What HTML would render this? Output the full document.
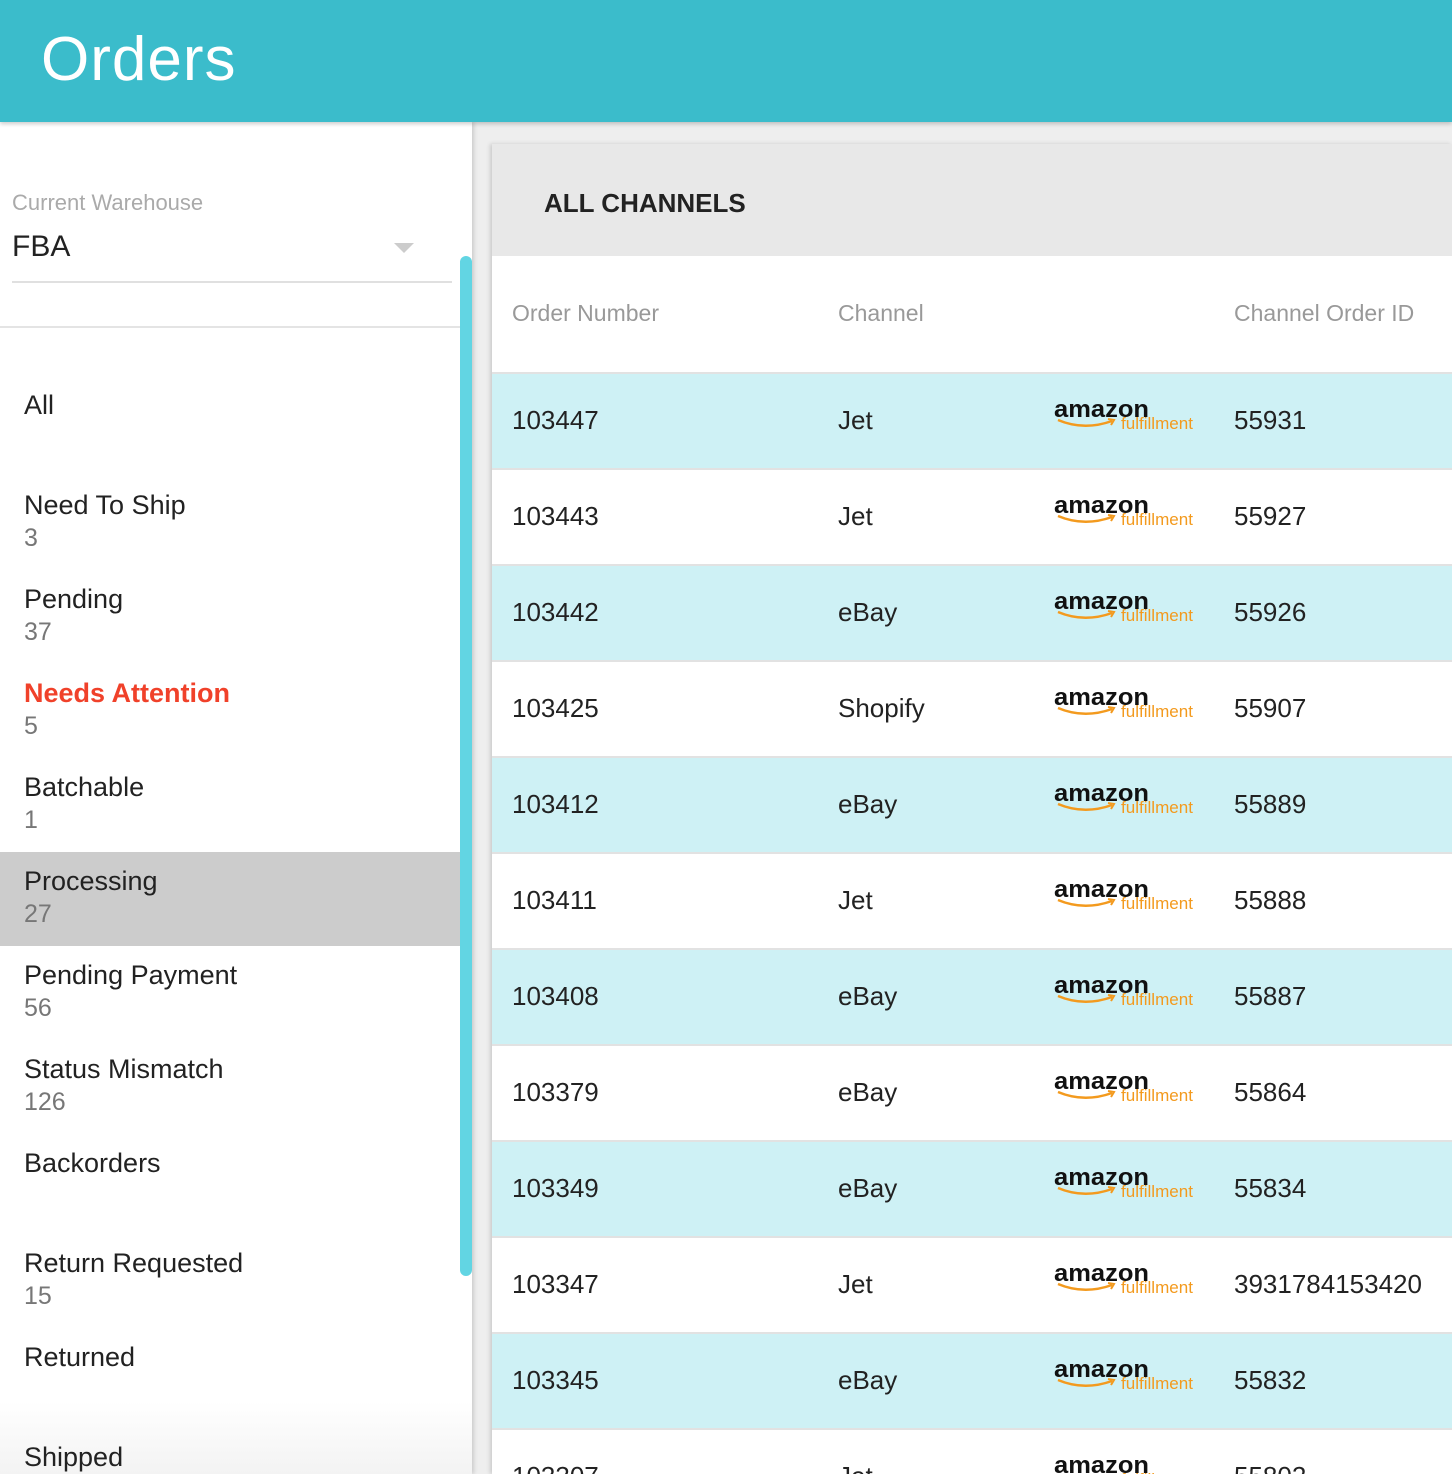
<!DOCTYPE html>
<html style="overflow:hidden;height:1474px"><head><style>
*{margin:0;padding:0;box-sizing:border-box}
body{width:1452px;height:1474px;overflow:hidden;background:#eeeeee;font-family:"Liberation Sans",sans-serif;position:relative}
.hdr{position:absolute;left:0;top:0;width:1452px;height:122px;background:#3bbccb;box-shadow:0 2px 4px rgba(0,0,0,.2);z-index:3}
.hdr h1{position:absolute;left:41px;top:24px;font-size:62px;font-weight:normal;color:#fff;letter-spacing:1px}
.side{position:absolute;left:0;top:122px;width:472px;height:1352px;overflow:hidden;background:linear-gradient(#fff 1280px,#f3f3f3);box-shadow:2px 0 4px rgba(0,0,0,.15)}
.lbl{position:absolute;left:12px;top:68px;font-size:22px;color:#aaa}
.fba{position:absolute;left:12px;top:108px;font-size:30px;color:#222}
.tri{position:absolute;left:394px;top:121px;width:0;height:0;border-left:10px solid transparent;border-right:10px solid transparent;border-top:10px solid #ccc}
.ul{position:absolute;left:12px;top:159px;width:440px;height:2px;background:#e0e0e0}
.ul2{position:absolute;left:0;top:204px;width:472px;height:2px;background:#e4e4e4}
.it{position:absolute;left:0;width:460px;height:94px;padding-left:24px;font-size:27px;color:#222}
.it .t{position:absolute;top:18px}
.it .n{position:absolute;top:52px;color:#777;font-size:25px}
.sel{background:#cccccc}
.scr{position:absolute;left:460px;top:134px;width:12px;height:1020px;background:#62d5e3;border-radius:6px}
.main{position:absolute;left:492px;top:144px;width:960px;height:1330px;overflow:hidden;background:#fff;box-shadow:-2px 0 4px rgba(0,0,0,.15)}
.mh{height:112px;background:#e8e8e8;font-size:26px;font-weight:bold;color:#222;padding:44px 0 0 52px}
.ch{position:absolute;top:156px;font-size:23px;color:#999}
.row{position:absolute;left:0;width:960px;height:96px;border-top:2px solid #e2e2e2;font-size:26px;color:#222}
.row.c{background:#cef1f5}
.row span{position:absolute;top:31px}
.amz{position:absolute;left:562px;top:24px;width:145px;height:40px}
</style></head><body>
<div class="hdr"><h1>Orders</h1></div>
<div class="side">
<div class="lbl">Current Warehouse</div>
<div class="fba">FBA</div><div class="tri"></div><div class="ul"></div><div class="ul2"></div>
<div class="it" style="top:250px"><div class="t">All</div></div>
<div class="it" style="top:350px"><div class="t">Need To Ship</div><div class="n">3</div></div>
<div class="it" style="top:444px"><div class="t">Pending</div><div class="n">37</div></div>
<div class="it" style="top:538px"><div class="t" style="color:#f0412a;font-weight:bold">Needs Attention</div><div class="n">5</div></div>
<div class="it" style="top:632px"><div class="t">Batchable</div><div class="n">1</div></div>
<div class="it sel" style="top:730px"><div class="t" style="top:14px">Processing</div><div class="n" style="top:48px">27</div></div>
<div class="it" style="top:820px"><div class="t">Pending Payment</div><div class="n">56</div></div>
<div class="it" style="top:914px"><div class="t">Status Mismatch</div><div class="n">126</div></div>
<div class="it" style="top:1008px"><div class="t">Backorders</div></div>
<div class="it" style="top:1108px"><div class="t">Return Requested</div><div class="n">15</div></div>
<div class="it" style="top:1202px"><div class="t">Returned</div></div>
<div class="it" style="top:1302px"><div class="t">Shipped</div></div>
<div class="scr"></div>
</div>
<div class="main">
<div class="mh">ALL CHANNELS</div>
<div class="ch" style="left:20px">Order Number</div>
<div class="ch" style="left:346px">Channel</div>
<div class="ch" style="left:742px">Channel Order ID</div>
<div id="rows"></div>
</div>
<script>
var d=[["103447","Jet","55931"],["103443","Jet","55927"],["103442","eBay","55926"],["103425","Shopify","55907"],["103412","eBay","55889"],["103411","Jet","55888"],["103408","eBay","55887"],["103379","eBay","55864"],["103349","eBay","55834"],["103347","Jet","3931784153420"],["103345","eBay","55832"],["103307","Jet","55802"]];
var h="";
var logo='<svg class="amz" viewBox="0 0 145 40"><text x="0" y="19" font-family="Liberation Sans" font-weight="bold" font-size="24" fill="#111" textLength="95" lengthAdjust="spacingAndGlyphs">amazon</text><path d="M4 22 Q30 33 58 23" stroke="#f39a1e" stroke-width="2.5" fill="none"/><path d="M54 21 L60 22 L57 27" stroke="#f39a1e" stroke-width="2" fill="none"/><text x="67" y="31" font-family="Liberation Sans" font-size="17" fill="#f39a1e" textLength="72" lengthAdjust="spacingAndGlyphs">fulfillment</text></svg>';
d.forEach(function(r,i){h+='<div class="row'+(i%2==0?' c':'')+'" style="top:'+(228+96*i)+'px"><span style="left:20px">'+r[0]+'</span><span style="left:346px">'+r[1]+'</span>'+logo+'<span style="left:742px">'+r[2]+'</span></div>';});
document.getElementById("rows").innerHTML=h;
</script>
</body></html>
